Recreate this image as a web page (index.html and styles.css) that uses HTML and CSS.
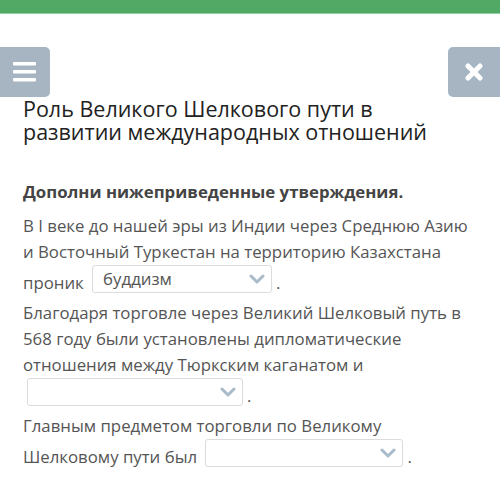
FILE: index.html
```html
<!DOCTYPE html>
<html lang="ru">
<head>
    <meta charset="UTF-8">
    <meta name="viewport" content="width=device-width, initial-scale=1.0">
    <title>Роль Великого Шелкового пути</title>
    <link rel="stylesheet" href="styles.css">
</head>
<body>
    <div class="topbar"></div>
    <div class="toolbar">
        <button class="tool-btn menu-btn" aria-label="Меню">
            <svg width="24" height="20" viewBox="0 0 24 20">
                <rect x="0" y="0" width="23" height="3.5" rx="1" fill="#fff"/>
                <rect x="0" y="8" width="23" height="3.5" rx="1" fill="#fff"/>
                <rect x="0" y="16" width="23" height="3.5" rx="1" fill="#fff"/>
            </svg>
        </button>
        <button class="tool-btn close-btn" aria-label="Закрыть">
            <svg width="18" height="18" viewBox="0 0 18 18">
                <path d="M3 3 L15 15 M15 3 L3 15" stroke="#fff" stroke-width="5" stroke-linecap="round"/>
            </svg>
        </button>
    </div>
    <div class="content">
        <h1 class="title">Роль Великого Шелкового пути в развитии международных отношений</h1>
        <h2 class="task">Дополни нижеприведенные утверждения.</h2>

        <p class="statement">В I веке до нашей эры из Индии через Среднюю Азию и Восточный Туркестан на территорию Казахстана проник <span class="dropdown w180"><span class="dropdown-text">буддизм</span><svg class="chevron" width="16" height="10" viewBox="0 0 16 10"><path d="M2 2 L8 8 L14 2" fill="none" stroke="#a9bac9" stroke-width="3" stroke-linecap="round" stroke-linejoin="round"/></svg></span>.</p>

        <p class="statement">Благодаря торговле через Великий Шелковый путь в 568 году были установлены дипломатические отношения между Тюркским каганатом и <span class="dropdown w216"><span class="dropdown-text"></span><svg class="chevron" width="16" height="10" viewBox="0 0 16 10"><path d="M2 2 L8 8 L14 2" fill="none" stroke="#a9bac9" stroke-width="3" stroke-linecap="round" stroke-linejoin="round"/></svg></span>.</p>

        <p class="statement">Главным предметом торговли по Великому Шелковому пути был <span class="dropdown w198"><span class="dropdown-text"></span><svg class="chevron" width="16" height="10" viewBox="0 0 16 10"><path d="M2 2 L8 8 L14 2" fill="none" stroke="#a9bac9" stroke-width="3" stroke-linecap="round" stroke-linejoin="round"/></svg></span>.</p>
    </div>
</body>
</html>
```

FILE: styles.css
```css
body {
    font-family: "Open Sans", "Noto Sans", sans-serif;
    margin: 0;
    padding: 0;
    background-color: #fff;
    color: #555;
}
.topbar {
    height: 13px;
    background-color: #52a965;
    border-bottom: 1px solid #8fd3a0;
}
.toolbar {
    display: flex;
    justify-content: space-between;
    margin-top: 33px;
}
.tool-btn {
    width: 50px;
    height: 50px;
    border: none;
    padding: 0;
    background-color: #a7b5c3;
    display: flex;
    align-items: center;
    justify-content: center;
}
.menu-btn {
    border-radius: 0 5px 5px 0;
}
.close-btn {
    width: 52px;
    border-radius: 5px 0 0 5px;
}
.content {
    padding: 0 28px 0 23px;
}
.title {
    max-width: 425px;
    font-size: 21.5px;
    font-weight: normal;
    line-height: 23px;
    color: #222;
    margin: 0 0 37px 0;
}
.task {
    font-size: 16.8px;
    font-weight: bold;
    line-height: 24px;
    color: #444;
    margin: 0 0 9px 0;
}
.statement {
    font-size: 16.8px;
    line-height: 26px;
    margin: 0 0 4px 0;
}
.dropdown {
    display: inline-block;
    position: relative;
    box-sizing: border-box;
    height: 28px;
    margin: 0 4px;
    border: 1px solid #dcdcdc;
    border-radius: 3px;
    overflow: hidden;
    vertical-align: -4px;
}
.dropdown-text {
    display: block;
    padding: 0 30px 0 10px;
    line-height: 26px;
    color: #555;
}
.chevron {
    position: absolute;
    right: 6px;
    top: 8px;
}
.w180 { width: 180px; }
.w216 { width: 216px; }
.w198 { width: 198px; }
```
